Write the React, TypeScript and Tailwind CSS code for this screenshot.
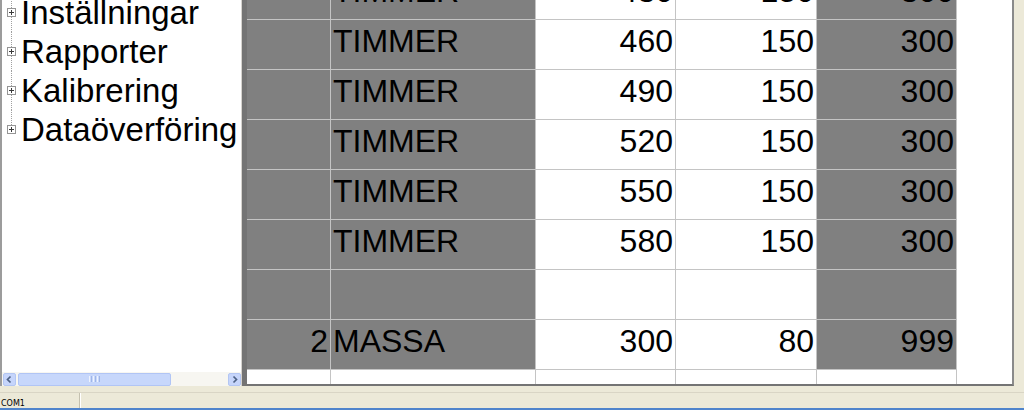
import React from "react";

// Tree items in the left navigation pane
const treeItems = ["Inställningar", "Rapporter", "Kalibrering", "Dataöverföring"];

type Row = { nr: string; sort: string; a: string; b: string; c: string; fresh?: boolean };

const rows: Row[] = [
  { nr: "", sort: "TIMMER", a: "430", b: "150", c: "300" },
  { nr: "", sort: "TIMMER", a: "460", b: "150", c: "300" },
  { nr: "", sort: "TIMMER", a: "490", b: "150", c: "300" },
  { nr: "", sort: "TIMMER", a: "520", b: "150", c: "300" },
  { nr: "", sort: "TIMMER", a: "550", b: "150", c: "300" },
  { nr: "", sort: "TIMMER", a: "580", b: "150", c: "300" },
  { nr: "", sort: "", a: "", b: "", c: "" },
  { nr: "2", sort: "MASSA", a: "300", b: "80", c: "999" },
  { nr: "", sort: "", a: "", b: "", c: "", fresh: true },
];

const PlusBox = () => (
  <svg width="9" height="9" viewBox="0 0 9 9" className="block shrink-0">
    <rect x="0.5" y="0.5" width="8" height="8" fill="#fff" stroke="#959595" />
    <line x1="2" y1="4.5" x2="7" y2="4.5" stroke="#3a3a3a" />
    <line x1="4.5" y1="2" x2="4.5" y2="7" stroke="#3a3a3a" />
  </svg>
);

const Chevron = ({ dir }: { dir: "left" | "right" }) => (
  <svg width="11" height="11" viewBox="0 0 11 11" className="block">
    <polyline
      points={dir === "left" ? "6.5,2.5 3.5,5.5 6.5,8.5" : "4.5,2.5 7.5,5.5 4.5,8.5"}
      fill="none"
      stroke="#4d6185"
      strokeWidth="1.7"
    />
  </svg>
);

function Tree() {
  return (
    <div className="-mt-[7px] flex flex-col">
      {treeItems.map((label, i) => (
        <div key={label} className="flex h-[39px] items-stretch">
          <div className="ml-[5px] flex w-[9px] flex-col items-center">
            <div className="w-0 flex-1 border-l border-dotted border-[#a0a0a0]" />
            <PlusBox />
            <div
              className={
                i === treeItems.length - 1
                  ? "w-0 flex-1"
                  : "w-0 flex-1 border-l border-dotted border-[#a0a0a0]"
              }
            />
          </div>
          <span className="ml-[5px] whitespace-nowrap text-[33px] leading-[39px] text-black">{label}</span>
        </div>
      ))}
    </div>
  );
}

function HScroll() {
  return (
    <div className="flex h-[14px] items-center bg-[#f7f6f1] pl-px">
      <div className="flex h-[13px] w-[13px] items-center justify-center rounded-[2px] border border-[#b3c6f3] bg-[#c6d5fb]">
        <Chevron dir="left" />
      </div>
      <div className="ml-[2px] flex h-[13px] w-[153px] items-center justify-center gap-px rounded-[2px] border border-[#b1c5f5] bg-[#c7d7fb]">
        <div className="h-[6px] w-px bg-[#eef3fe]" />
        <div className="h-[6px] w-px bg-[#9fb6e8]" />
        <div className="h-[6px] w-px bg-[#eef3fe]" />
        <div className="h-[6px] w-px bg-[#9fb6e8]" />
        <div className="h-[6px] w-px bg-[#eef3fe]" />
        <div className="h-[6px] w-px bg-[#9fb6e8]" />
      </div>
      <div className="flex-1" />
      <div className="flex h-[13px] w-[13px] items-center justify-center rounded-[2px] border border-[#b3c6f3] bg-[#c6d5fb]">
        <Chevron dir="right" />
      </div>
    </div>
  );
}

function Cell({
  text,
  width,
  gray,
  right,
}: {
  text: string;
  width: string;
  gray: boolean;
  right?: boolean;
}) {
  return (
    <div
      className={`${width} h-[50px] shrink-0 border-b border-r border-[#c4c4c4] pt-[5px] text-[32px] leading-8 text-black ${
        gray ? "bg-[#808080]" : "bg-white"
      } ${right ? "pr-[2px] text-right" : "pl-[2px] text-left"}`}
    >
      {text}
    </div>
  );
}

function Grid() {
  return (
    <div className="h-[386px] flex-1 overflow-hidden border-b-2 border-l-[5px] border-r-2 border-[#747474] border-r-[#8a8a8a] bg-white">
      <div className="-mt-[30px] flex flex-col">
        {rows.map((r, i) => (
          <div key={i} className="flex">
            <Cell text={r.nr} width="w-[84px]" gray={!r.fresh} right />
            <Cell text={r.sort} width="w-[205px]" gray={!r.fresh} />
            <Cell text={r.a} width="w-[140px]" gray={false} right />
            <Cell text={r.b} width="w-[141px]" gray={false} right />
            <Cell text={r.c} width="w-[140px]" gray={!r.fresh} right />
          </div>
        ))}
      </div>
    </div>
  );
}

export default function App() {
  return (
    <div
      className="flex h-[410px] w-[1024px] flex-col overflow-hidden bg-[#ece9d8]"
      style={{ fontFamily: '"Liberation Sans", Arial, sans-serif' }}
    >
      <div className="flex h-[386px] shrink-0">
        <div className="flex h-[386px] w-[242px] shrink-0 flex-col border-l-2 border-r border-[#9c9c9c] border-r-[#d6d3ce] bg-white">
          <div className="flex-1 overflow-hidden">
            <Tree />
          </div>
          <HScroll />
        </div>
        <Grid />
        <div className="w-[10px] shrink-0" />
      </div>
      <div className="flex h-[24px] shrink-0 flex-col">
        <div className="mt-[6px] flex h-[16px] border-t border-[#d9d5c5]">
          <div
            className="w-[80px] border-r border-[#c4c0af] pl-px pt-[7px] text-[8px] leading-none text-black"
            style={{ fontFamily: '"DejaVu Sans", sans-serif' }}
          >
            COM1
          </div>
          <div className="flex-1 border-l border-white" />
        </div>
        <div className="h-[2px] bg-[#4f84cc]" />
      </div>
    </div>
  );
}
